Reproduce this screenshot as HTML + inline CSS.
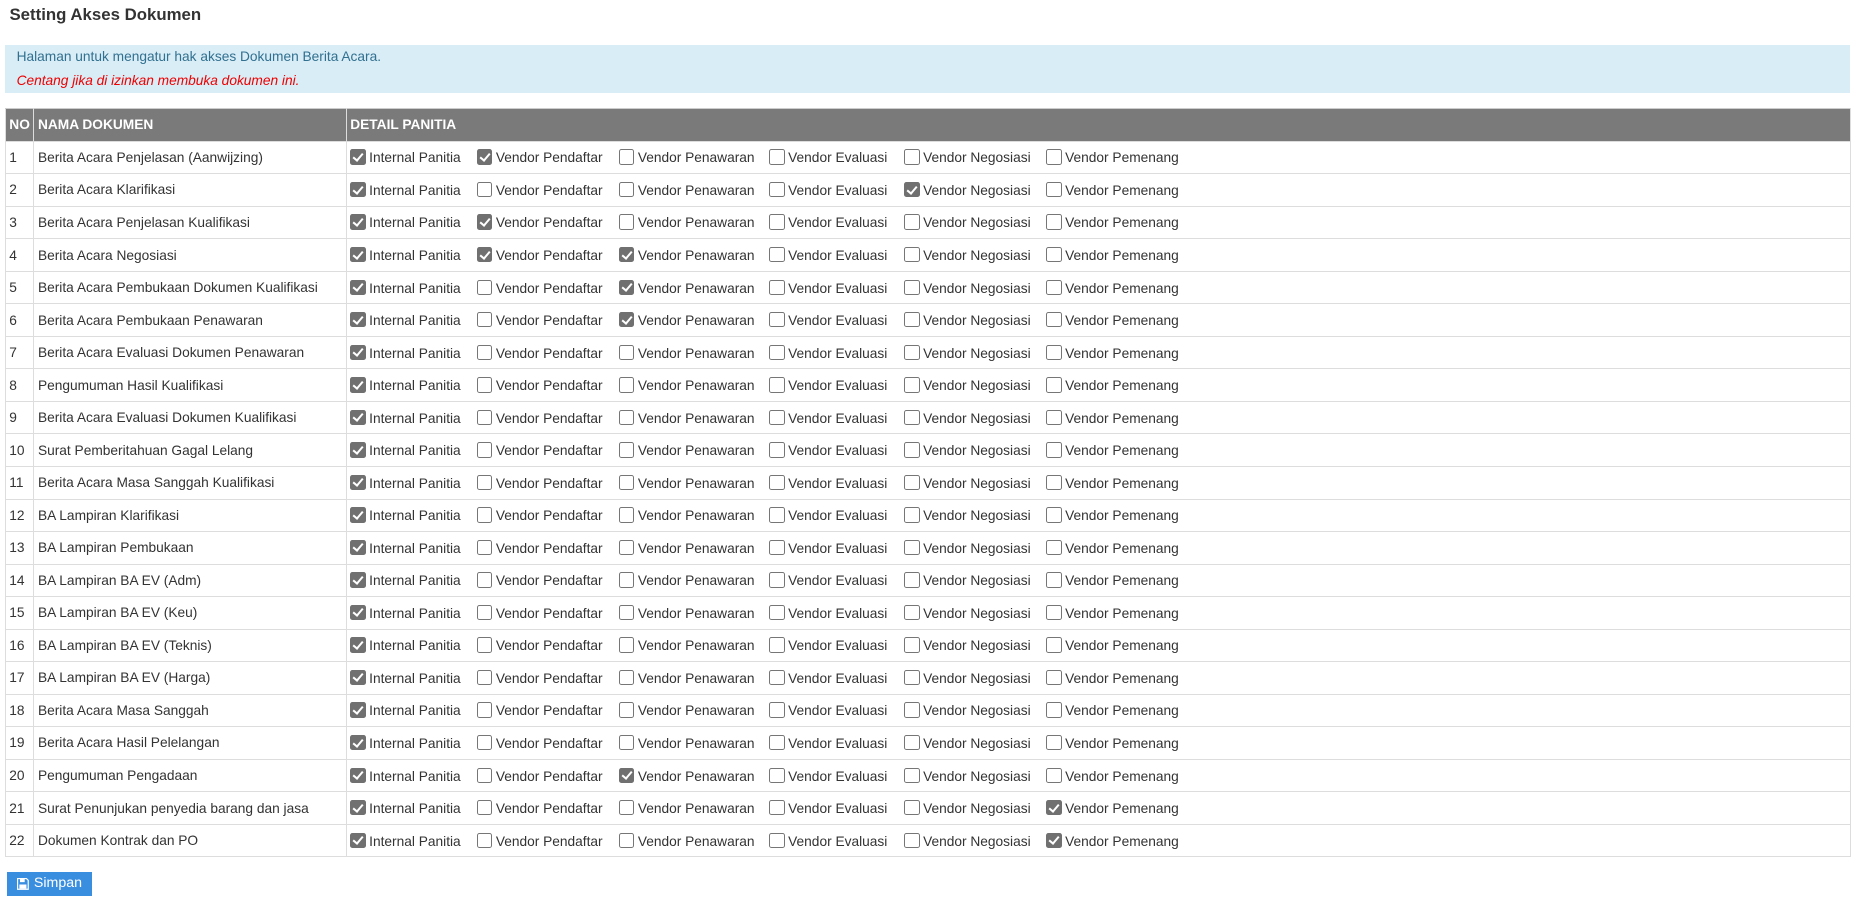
<!DOCTYPE html>
<html><head><meta charset="utf-8"><style>
html{zoom:1.18367}
body{margin:0;background:#fff;font-family:"Liberation Sans",Arial,sans-serif;font-size:11.6px;color:#333;width:1568px;height:763px;overflow:hidden;position:relative}
h1{position:absolute;left:8px;top:4px;margin:0;font-size:14.2px;font-weight:bold;color:#333}
.info{position:absolute;left:4px;top:38px;width:1559px;height:41px;background:#d9edf7}
.info .a{position:absolute;left:10px;top:3px;color:#31708f}
.info .b{position:absolute;left:10px;top:24px;color:#e00;font-style:italic}
table{position:absolute;left:4px;top:91px;width:1560px;border-collapse:collapse}
th{background:#7a7a7a;color:#fff;font-weight:bold;text-align:left;height:27px;padding:0 3px;border:1px solid #ddd;border-top:1px solid #ccc}
td{height:26.65px;padding:0 3px;border:1px solid #ddd;white-space:nowrap}
.o{display:inline-block}
.w1{width:107px}.w2{width:120px}.w3{width:127px}.w4{width:114px}.w5{width:120px}
.cb{display:inline-block;box-sizing:border-box;width:13px;height:13px;border:1px solid #767676;border-radius:2px;background:#fff;vertical-align:-2px;margin-right:3px;position:relative}
.on{background:#707070;border-color:#707070}
.on::after{content:"";position:absolute;left:3.5px;top:0.5px;width:3px;height:7px;border:solid #fff;border-width:0 2px 2px 0;transform:rotate(40deg)}
.btn{position:absolute;left:6px;top:737px;width:72px;height:20px;background:#3a8ee0;color:#fff;font-size:12px;line-height:20px;text-align:center}
.btn svg{vertical-align:-2px;margin-right:4px}
</style></head><body>
<h1>Setting Akses Dokumen</h1>
<div class="info"><div class="a">Halaman untuk mengatur hak akses Dokumen Berita Acara.</div><div class="b">Centang jika di izinkan membuka dokumen ini.</div></div>
<table>
<tr><th style="width:17px">NO</th><th style="width:257px">NAMA DOKUMEN</th><th>DETAIL PANITIA</th></tr>
<tr><td>1</td><td>Berita Acara Penjelasan (Aanwijzing)</td><td><span class="o w1"><span class="cb on"></span>Internal Panitia</span><span class="o w2"><span class="cb on"></span>Vendor Pendaftar</span><span class="o w3"><span class="cb"></span>Vendor Penawaran</span><span class="o w4"><span class="cb"></span>Vendor Evaluasi</span><span class="o w5"><span class="cb"></span>Vendor Negosiasi</span><span class="o"><span class="cb"></span>Vendor Pemenang</span></td></tr>
<tr><td>2</td><td>Berita Acara Klarifikasi</td><td><span class="o w1"><span class="cb on"></span>Internal Panitia</span><span class="o w2"><span class="cb"></span>Vendor Pendaftar</span><span class="o w3"><span class="cb"></span>Vendor Penawaran</span><span class="o w4"><span class="cb"></span>Vendor Evaluasi</span><span class="o w5"><span class="cb on"></span>Vendor Negosiasi</span><span class="o"><span class="cb"></span>Vendor Pemenang</span></td></tr>
<tr><td>3</td><td>Berita Acara Penjelasan Kualifikasi</td><td><span class="o w1"><span class="cb on"></span>Internal Panitia</span><span class="o w2"><span class="cb on"></span>Vendor Pendaftar</span><span class="o w3"><span class="cb"></span>Vendor Penawaran</span><span class="o w4"><span class="cb"></span>Vendor Evaluasi</span><span class="o w5"><span class="cb"></span>Vendor Negosiasi</span><span class="o"><span class="cb"></span>Vendor Pemenang</span></td></tr>
<tr><td>4</td><td>Berita Acara Negosiasi</td><td><span class="o w1"><span class="cb on"></span>Internal Panitia</span><span class="o w2"><span class="cb on"></span>Vendor Pendaftar</span><span class="o w3"><span class="cb on"></span>Vendor Penawaran</span><span class="o w4"><span class="cb"></span>Vendor Evaluasi</span><span class="o w5"><span class="cb"></span>Vendor Negosiasi</span><span class="o"><span class="cb"></span>Vendor Pemenang</span></td></tr>
<tr><td>5</td><td>Berita Acara Pembukaan Dokumen Kualifikasi</td><td><span class="o w1"><span class="cb on"></span>Internal Panitia</span><span class="o w2"><span class="cb"></span>Vendor Pendaftar</span><span class="o w3"><span class="cb on"></span>Vendor Penawaran</span><span class="o w4"><span class="cb"></span>Vendor Evaluasi</span><span class="o w5"><span class="cb"></span>Vendor Negosiasi</span><span class="o"><span class="cb"></span>Vendor Pemenang</span></td></tr>
<tr><td>6</td><td>Berita Acara Pembukaan Penawaran</td><td><span class="o w1"><span class="cb on"></span>Internal Panitia</span><span class="o w2"><span class="cb"></span>Vendor Pendaftar</span><span class="o w3"><span class="cb on"></span>Vendor Penawaran</span><span class="o w4"><span class="cb"></span>Vendor Evaluasi</span><span class="o w5"><span class="cb"></span>Vendor Negosiasi</span><span class="o"><span class="cb"></span>Vendor Pemenang</span></td></tr>
<tr><td>7</td><td>Berita Acara Evaluasi Dokumen Penawaran</td><td><span class="o w1"><span class="cb on"></span>Internal Panitia</span><span class="o w2"><span class="cb"></span>Vendor Pendaftar</span><span class="o w3"><span class="cb"></span>Vendor Penawaran</span><span class="o w4"><span class="cb"></span>Vendor Evaluasi</span><span class="o w5"><span class="cb"></span>Vendor Negosiasi</span><span class="o"><span class="cb"></span>Vendor Pemenang</span></td></tr>
<tr><td>8</td><td>Pengumuman Hasil Kualifikasi</td><td><span class="o w1"><span class="cb on"></span>Internal Panitia</span><span class="o w2"><span class="cb"></span>Vendor Pendaftar</span><span class="o w3"><span class="cb"></span>Vendor Penawaran</span><span class="o w4"><span class="cb"></span>Vendor Evaluasi</span><span class="o w5"><span class="cb"></span>Vendor Negosiasi</span><span class="o"><span class="cb"></span>Vendor Pemenang</span></td></tr>
<tr><td>9</td><td>Berita Acara Evaluasi Dokumen Kualifikasi</td><td><span class="o w1"><span class="cb on"></span>Internal Panitia</span><span class="o w2"><span class="cb"></span>Vendor Pendaftar</span><span class="o w3"><span class="cb"></span>Vendor Penawaran</span><span class="o w4"><span class="cb"></span>Vendor Evaluasi</span><span class="o w5"><span class="cb"></span>Vendor Negosiasi</span><span class="o"><span class="cb"></span>Vendor Pemenang</span></td></tr>
<tr><td>10</td><td>Surat Pemberitahuan Gagal Lelang</td><td><span class="o w1"><span class="cb on"></span>Internal Panitia</span><span class="o w2"><span class="cb"></span>Vendor Pendaftar</span><span class="o w3"><span class="cb"></span>Vendor Penawaran</span><span class="o w4"><span class="cb"></span>Vendor Evaluasi</span><span class="o w5"><span class="cb"></span>Vendor Negosiasi</span><span class="o"><span class="cb"></span>Vendor Pemenang</span></td></tr>
<tr><td>11</td><td>Berita Acara Masa Sanggah Kualifikasi</td><td><span class="o w1"><span class="cb on"></span>Internal Panitia</span><span class="o w2"><span class="cb"></span>Vendor Pendaftar</span><span class="o w3"><span class="cb"></span>Vendor Penawaran</span><span class="o w4"><span class="cb"></span>Vendor Evaluasi</span><span class="o w5"><span class="cb"></span>Vendor Negosiasi</span><span class="o"><span class="cb"></span>Vendor Pemenang</span></td></tr>
<tr><td>12</td><td>BA Lampiran Klarifikasi</td><td><span class="o w1"><span class="cb on"></span>Internal Panitia</span><span class="o w2"><span class="cb"></span>Vendor Pendaftar</span><span class="o w3"><span class="cb"></span>Vendor Penawaran</span><span class="o w4"><span class="cb"></span>Vendor Evaluasi</span><span class="o w5"><span class="cb"></span>Vendor Negosiasi</span><span class="o"><span class="cb"></span>Vendor Pemenang</span></td></tr>
<tr><td>13</td><td>BA Lampiran Pembukaan</td><td><span class="o w1"><span class="cb on"></span>Internal Panitia</span><span class="o w2"><span class="cb"></span>Vendor Pendaftar</span><span class="o w3"><span class="cb"></span>Vendor Penawaran</span><span class="o w4"><span class="cb"></span>Vendor Evaluasi</span><span class="o w5"><span class="cb"></span>Vendor Negosiasi</span><span class="o"><span class="cb"></span>Vendor Pemenang</span></td></tr>
<tr><td>14</td><td>BA Lampiran BA EV (Adm)</td><td><span class="o w1"><span class="cb on"></span>Internal Panitia</span><span class="o w2"><span class="cb"></span>Vendor Pendaftar</span><span class="o w3"><span class="cb"></span>Vendor Penawaran</span><span class="o w4"><span class="cb"></span>Vendor Evaluasi</span><span class="o w5"><span class="cb"></span>Vendor Negosiasi</span><span class="o"><span class="cb"></span>Vendor Pemenang</span></td></tr>
<tr><td>15</td><td>BA Lampiran BA EV (Keu)</td><td><span class="o w1"><span class="cb on"></span>Internal Panitia</span><span class="o w2"><span class="cb"></span>Vendor Pendaftar</span><span class="o w3"><span class="cb"></span>Vendor Penawaran</span><span class="o w4"><span class="cb"></span>Vendor Evaluasi</span><span class="o w5"><span class="cb"></span>Vendor Negosiasi</span><span class="o"><span class="cb"></span>Vendor Pemenang</span></td></tr>
<tr><td>16</td><td>BA Lampiran BA EV (Teknis)</td><td><span class="o w1"><span class="cb on"></span>Internal Panitia</span><span class="o w2"><span class="cb"></span>Vendor Pendaftar</span><span class="o w3"><span class="cb"></span>Vendor Penawaran</span><span class="o w4"><span class="cb"></span>Vendor Evaluasi</span><span class="o w5"><span class="cb"></span>Vendor Negosiasi</span><span class="o"><span class="cb"></span>Vendor Pemenang</span></td></tr>
<tr><td>17</td><td>BA Lampiran BA EV (Harga)</td><td><span class="o w1"><span class="cb on"></span>Internal Panitia</span><span class="o w2"><span class="cb"></span>Vendor Pendaftar</span><span class="o w3"><span class="cb"></span>Vendor Penawaran</span><span class="o w4"><span class="cb"></span>Vendor Evaluasi</span><span class="o w5"><span class="cb"></span>Vendor Negosiasi</span><span class="o"><span class="cb"></span>Vendor Pemenang</span></td></tr>
<tr><td>18</td><td>Berita Acara Masa Sanggah</td><td><span class="o w1"><span class="cb on"></span>Internal Panitia</span><span class="o w2"><span class="cb"></span>Vendor Pendaftar</span><span class="o w3"><span class="cb"></span>Vendor Penawaran</span><span class="o w4"><span class="cb"></span>Vendor Evaluasi</span><span class="o w5"><span class="cb"></span>Vendor Negosiasi</span><span class="o"><span class="cb"></span>Vendor Pemenang</span></td></tr>
<tr><td>19</td><td>Berita Acara Hasil Pelelangan</td><td><span class="o w1"><span class="cb on"></span>Internal Panitia</span><span class="o w2"><span class="cb"></span>Vendor Pendaftar</span><span class="o w3"><span class="cb"></span>Vendor Penawaran</span><span class="o w4"><span class="cb"></span>Vendor Evaluasi</span><span class="o w5"><span class="cb"></span>Vendor Negosiasi</span><span class="o"><span class="cb"></span>Vendor Pemenang</span></td></tr>
<tr><td>20</td><td>Pengumuman Pengadaan</td><td><span class="o w1"><span class="cb on"></span>Internal Panitia</span><span class="o w2"><span class="cb"></span>Vendor Pendaftar</span><span class="o w3"><span class="cb on"></span>Vendor Penawaran</span><span class="o w4"><span class="cb"></span>Vendor Evaluasi</span><span class="o w5"><span class="cb"></span>Vendor Negosiasi</span><span class="o"><span class="cb"></span>Vendor Pemenang</span></td></tr>
<tr><td>21</td><td>Surat Penunjukan penyedia barang dan jasa</td><td><span class="o w1"><span class="cb on"></span>Internal Panitia</span><span class="o w2"><span class="cb"></span>Vendor Pendaftar</span><span class="o w3"><span class="cb"></span>Vendor Penawaran</span><span class="o w4"><span class="cb"></span>Vendor Evaluasi</span><span class="o w5"><span class="cb"></span>Vendor Negosiasi</span><span class="o"><span class="cb on"></span>Vendor Pemenang</span></td></tr>
<tr><td>22</td><td>Dokumen Kontrak dan PO</td><td><span class="o w1"><span class="cb on"></span>Internal Panitia</span><span class="o w2"><span class="cb"></span>Vendor Pendaftar</span><span class="o w3"><span class="cb"></span>Vendor Penawaran</span><span class="o w4"><span class="cb"></span>Vendor Evaluasi</span><span class="o w5"><span class="cb"></span>Vendor Negosiasi</span><span class="o"><span class="cb on"></span>Vendor Pemenang</span></td></tr>
</table>
<div class="btn"><svg width="10" height="10" viewBox="0 0 10 10"><path d="M0.5 0.5h7.5l1.5 1.5v7.5h-9z" fill="none" stroke="#fff"/><rect x="2.5" y="0.5" width="4" height="3" fill="#fff"/><rect x="2" y="5.5" width="6" height="3.5" fill="#fff"/></svg>Simpan</div>
</body></html>
